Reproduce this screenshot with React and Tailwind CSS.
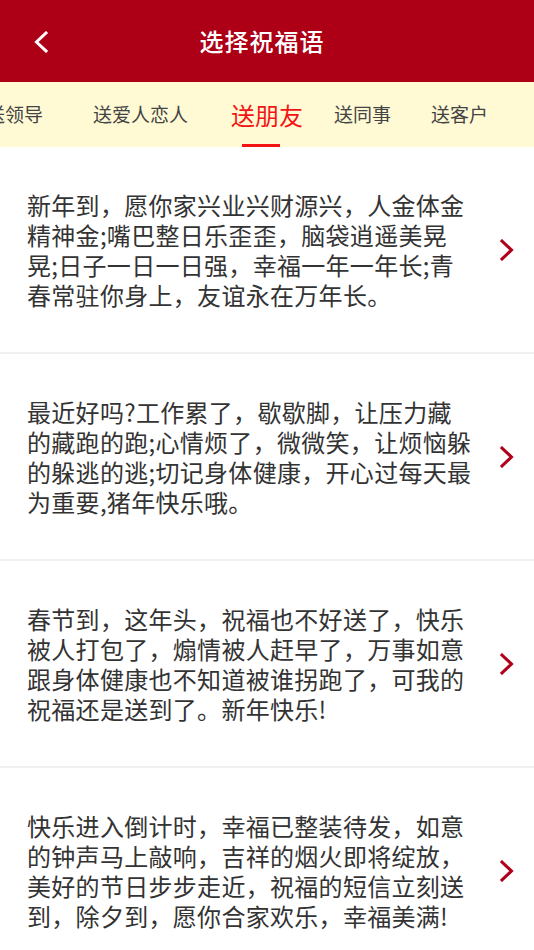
const tabs = [
  { label: "送领导", gap: "ml-[-14px]" },
  { label: "送爱人恋人", gap: "ml-[50px]" },
  { label: "送朋友", gap: "ml-[43px]", active: true },
  { label: "送同事", gap: "ml-[31px]" },
  { label: "送客户", gap: "ml-[40px]" },
];

const wishes = [
  [
    "新年到，愿你家兴业兴财源兴，人金体金",
    "精神金;嘴巴整日乐歪歪，脑袋逍遥美晃",
    "晃;日子一日一日强，幸福一年一年长;青",
    "春常驻你身上，友谊永在万年长。",
  ],
  [
    "最近好吗?工作累了，歇歇脚，让压力藏",
    "的藏跑的跑;心情烦了，微微笑，让烦恼躲",
    "的躲逃的逃;切记身体健康，开心过每天最",
    "为重要,猪年快乐哦。",
  ],
  [
    "春节到，这年头，祝福也不好送了，快乐",
    "被人打包了，煽情被人赶早了，万事如意",
    "跟身体健康也不知道被谁拐跑了，可我的",
    "祝福还是送到了。新年快乐!",
  ],
  [
    "快乐进入倒计时，幸福已整装待发，如意",
    "的钟声马上敲响，吉祥的烟火即将绽放，",
    "美好的节日步步走近，祝福的短信立刻送",
    "到，除夕到，愿你合家欢乐，幸福美满!",
  ],
];

// thin arrow, 13x21, like the app's own drawable
const Arrow = ({ left = false, className = "" }) => (
  <svg width="14" height="22" viewBox="0 0 14 22" className={className}>
    <polyline
      points={left ? "12,2 2.5,11 12,20" : "2,2 11.5,11 2,20"}
      fill="none"
      stroke="currentColor"
      strokeWidth="3"
      strokeLinecap="square"
    />
  </svg>
);

const WishItem = ({ lines }) => (
  <div className="flex items-center h-[207px] border-b-2 border-[#f0f0f0] pl-[27px] pr-[20px]">
    <div className="flex-1 text-[24px] leading-[30px] text-[#333333] tracking-[0.3px]">
      {lines.map((line) => (
        <div key={line} className="whitespace-nowrap">
          {line}
        </div>
      ))}
    </div>
    <Arrow className="text-[#b0001a] shrink-0" />
  </div>
);

const App = () => {
  return (
    <div
      className="w-[534px] h-[950px] overflow-hidden bg-white"
      style={{ fontFamily: '"Noto Sans CJK SC", "Noto Sans", sans-serif' }}
    >
      <header className="relative h-[82px] bg-[#ad0016] flex items-center justify-center pr-[10px]">
        <button className="absolute left-[34px] top-[31px] text-white">
          <Arrow left />
        </button>
        <h1 className="text-white text-[24px] font-medium tracking-[1px]">选择祝福语</h1>
      </header>

      <nav className="h-[65px] bg-[#fffad4] flex items-center overflow-hidden">
        {tabs.map((tab) => (
          <div key={tab.label} className={`relative shrink-0 h-full flex items-center ${tab.gap}`}>
            <span
              className={
                tab.active
                  ? "text-[24px] text-[#f41414] whitespace-nowrap"
                  : "text-[19px] text-[#444444] whitespace-nowrap"
              }
            >
              {tab.label}
            </span>
            {tab.active && (
              <span className="absolute bottom-0 left-[11px] w-[38px] h-[3px] bg-[#f41414]" />
            )}
          </div>
        ))}
      </nav>

      <main>
        {wishes.map((lines, i) => (
          <WishItem key={i} lines={lines} />
        ))}
      </main>
    </div>
  );
};

export default App;
